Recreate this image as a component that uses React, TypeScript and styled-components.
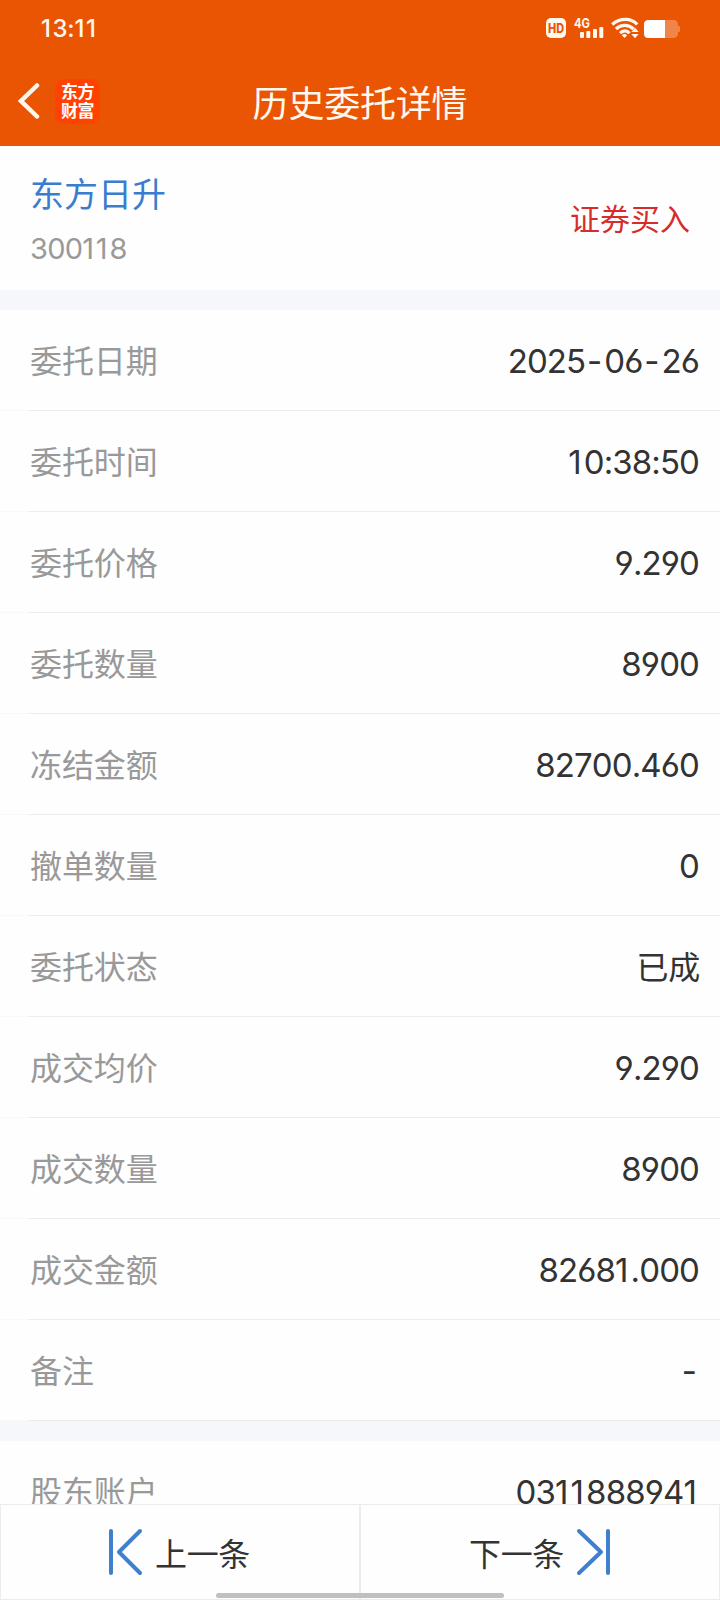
import React from "react";
import styled, { createGlobalStyle } from "styled-components";

const GlobalStyle = createGlobalStyle`
  * { box-sizing: border-box; }
  body { margin: 0; background: #fefefe; }
`;

const Screen = styled.div`
  width: 720px;
  height: 1600px;
  display: flex;
  flex-direction: column;
  overflow: hidden;
  background: #fefefe;
  color: #333;
  font-family: "Noto Sans CJK SC", sans-serif;
`;

const Header = styled.header`
  flex: none;
  height: 146px;
  background: #ea5504;
  color: #fff8ee;
`;

const StatusBar = styled.div`
  height: 56px;
  padding: 0 40px;
  display: flex;
  align-items: center;
  justify-content: space-between;
`;

const Clock = styled.span`
  padding: 1px 0 0 1px;
  font: 450 24px/28px Inter, sans-serif;
`;

const NavBar = styled.div`
  height: 90px;
  display: grid;
  grid-template-columns: 160px 1fr 160px;
  align-items: center;
`;

const NavLeft = styled.div`
  display: flex;
  align-items: center;
  gap: 15px;
  padding-left: 17px;
`;

const Logo = styled.div`
  width: 45px;
  height: 45px;
  padding: 2px 3px 5px 6px;
  border-radius: 9px;
  background: #ff4200;
  color: #fff;
  font-size: 17px;
  font-weight: 700;
  line-height: 19px;
  letter-spacing: -0.5px;
  word-break: break-all;
`;

const Title = styled.h1`
  margin: 0;
  text-align: center;
  font-size: 36px;
  line-height: 44px;
  font-weight: 400;
  letter-spacing: -0.2px;
  white-space: nowrap;
`;

const Content = styled.main`
  flex: 1;
  min-height: 0;
  overflow: hidden;
`;

const Summary = styled.section`
  height: 144px;
  padding: 0 30px;
  display: flex;
  align-items: center;
  justify-content: space-between;
`;

const Stock = styled.div`
  display: flex;
  flex-direction: column;
  gap: 17px;
`;

const StockName = styled.div`
  color: #3a7dce;
  font-size: 34px;
  line-height: 44px;
`;

const StockCode = styled.div`
  color: #999;
  font: 380 29px/34px Inter, sans-serif;
`;

const Side = styled.div`
  padding-bottom: 2px;
  color: #d62c2c;
  font-size: 30px;
  line-height: 40px;
`;

const Gap = styled.div`
  height: 20px;
  background: #f6f7fa;
`;

const Row = styled.div`
  height: 101px;
  padding: 0 20px 0 30px;
  display: flex;
  align-items: center;
  justify-content: space-between;
  border-bottom: 1px solid;
  border-image: linear-gradient(to right, #f9f9f9 30px, #ececec 30px) 1;
`;

const Label = styled.span`
  padding-bottom: 2px;
  color: #999;
  font-size: 32px;
  line-height: 44px;
  letter-spacing: -0.1px;
`;

const TextValue = styled.span`
  padding-bottom: 2px;
  font-size: 32px;
  line-height: 44px;
  letter-spacing: -0.2px;
`;

const NumberValue = styled.span`
  padding-top: 2px;
  margin-right: 1px;
  font: 380 33px/44px Inter, sans-serif;
`;

const Digits = styled.span<{ $tracking: number }>`
  font-feature-settings: "cv03", "cv04", "calt" 0;
  font-kerning: none;
  letter-spacing: ${(p) => p.$tracking}em;
`;

const Narrow = styled.span<{ $dash: boolean }>`
  margin-left: ${(p) => (p.$dash ? 0.05 : 0)}em;
  letter-spacing: 0.065em;
`;

const Footer = styled.footer`
  position: relative;
  flex: none;
  height: 96px;
  display: grid;
  grid-template-columns: 1fr 1fr;
`;

const PageButton = styled.button`
  border: 1px solid #ececec;
  padding: 0 1px 1px 0;
  background: none;
  display: flex;
  align-items: center;
  justify-content: center;
  gap: 12px;
  color: #333;
  font: 400 32px/44px "Noto Sans CJK SC", sans-serif;
  letter-spacing: -0.3px;
`;

const HomeIndicator = styled.div`
  position: absolute;
  left: 216px;
  bottom: 2px;
  width: 288px;
  height: 5px;
  border-radius: 3px;
  background: #c0c0c0;
`;

const StatusIcons = () => (
  <svg width="136" height="24" viewBox="0 0 136 24" fill="#fff8ee">
    <rect x="2" y="2" width="20" height="20" rx="5" />
    <text x="12" y="16.500" textAnchor="middle" textLength="16" lengthAdjust="spacingAndGlyphs" fontFamily="Inter" fontWeight="800" fontSize="12.500" fill="#ea5504">HD</text>
    <text x="30" y="11.500" textLength="16" lengthAdjust="spacingAndGlyphs" fontFamily="Inter" fontWeight="700" fontSize="13">4G</text>
    <rect x="36" y="16" width="4" height="6" rx="1" />
    <rect x="42.300" y="15" width="4" height="7" rx="1" />
    <rect x="49" y="13" width="4" height="9" rx="1" />
    <rect x="55.300" y="11" width="4" height="11" rx="1" />
    <g fill="none" stroke="#fff8ee" strokeWidth="3.200">
      <path d="M68.200 8.500C75.500 1.700 87.500 1.700 93.200 8.500" />
      <path d="M72 13C77 8.200 84.500 8.200 89.500 13" />
      <path d="M76 17.200C79 14.200 83 14.200 85.500 17.200" />
    </g>
    <path d="M77.800 19.200Q80.500 17 83.200 19.200L80.500 22ZM87.300 16L91 11.800L94.700 16ZM87.300 18L91 22.200L94.700 18Z" />
    <rect x="100" y="4" width="34" height="18" rx="4.500" fill="#f18449" />
    <path d="M134 10h1q1 0 1 1v4q0 1-1 1h-1z" fill="#f18449" />
    <path d="M104.500 4H121V22H104.500Q100 22 100 17.500V8.500Q100 4 104.500 4Z" fill="#fff" />
  </svg>
);

const BackIcon = () => (
  <svg width="23" height="38" viewBox="0 0 23 38" fill="none" stroke="#fff8ee" strokeWidth="4.500" strokeLinecap="round">
    <path d="M20 3.500L4 19L20 34.500" />
  </svg>
);

const StepIcon = ({ next }: { next?: boolean }) => (
  <svg width="34" height="48" viewBox="0 0 34 48" fill="none" stroke="#3f7fcd" strokeWidth="4" strokeLinecap="round" strokeLinejoin="round">
    <path d={next ? "M3 3L25 24L3 45M32 3V45" : "M2 3V45M31 3L10 24L31 45"} />
  </svg>
);

const Numeric = ({ text, tracking = -0.027 }: { text: string; tracking?: number }) => (
  <Digits $tracking={tracking}>
    {text.split(/([1-]+)/).map((part, i) =>
      i % 2 ? (
        <Narrow key={i} $dash={part === "-"}>
          {part}
        </Narrow>
      ) : (
        part
      ),
    )}
  </Digits>
);

type Field = { label: string; value: string };

const orderFields: Field[] = [
  { label: "委托日期", value: "2025-06-26" },
  { label: "委托时间", value: "10:38:50" },
  { label: "委托价格", value: "9.290" },
  { label: "委托数量", value: "8900" },
  { label: "冻结金额", value: "82700.460" },
  { label: "撤单数量", value: "0" },
  { label: "委托状态", value: "已成" },
  { label: "成交均价", value: "9.290" },
  { label: "成交数量", value: "8900" },
  { label: "成交金额", value: "82681.000" },
  { label: "备注", value: "-" },
];

const accountFields: Field[] = [{ label: "股东账户", value: "0311888941" }];

const FieldList = ({ fields }: { fields: Field[] }) => (
  <section>
    {fields.map(({ label, value }) => (
      <Row key={label}>
        <Label>{label}</Label>
        {/^[\d.:-]+$/.test(value) ? (
          <NumberValue>
            <Numeric text={value} />
          </NumberValue>
        ) : (
          <TextValue>{value}</TextValue>
        )}
      </Row>
    ))}
  </section>
);

export default function App() {
  return (
    <Screen>
      <GlobalStyle />
      <Header>
        <StatusBar>
          <Clock>
            <Numeric text="13:11" tracking={-0.01} />
          </Clock>
          <StatusIcons />
        </StatusBar>
        <NavBar>
          <NavLeft>
            <BackIcon />
            <Logo>东方财富</Logo>
          </NavLeft>
          <Title>历史委托详情</Title>
        </NavBar>
      </Header>
      <Content>
        <Summary>
          <Stock>
            <StockName>东方日升</StockName>
            <StockCode>
              <Numeric text="300118" />
            </StockCode>
          </Stock>
          <Side>证券买入</Side>
        </Summary>
        <Gap />
        <FieldList fields={orderFields} />
        <Gap />
        <FieldList fields={accountFields} />
      </Content>
      <Footer>
        <PageButton>
          <StepIcon />
          上一条
        </PageButton>
        <PageButton>
          下一条
          <StepIcon next />
        </PageButton>
        <HomeIndicator />
      </Footer>
    </Screen>
  );
}
